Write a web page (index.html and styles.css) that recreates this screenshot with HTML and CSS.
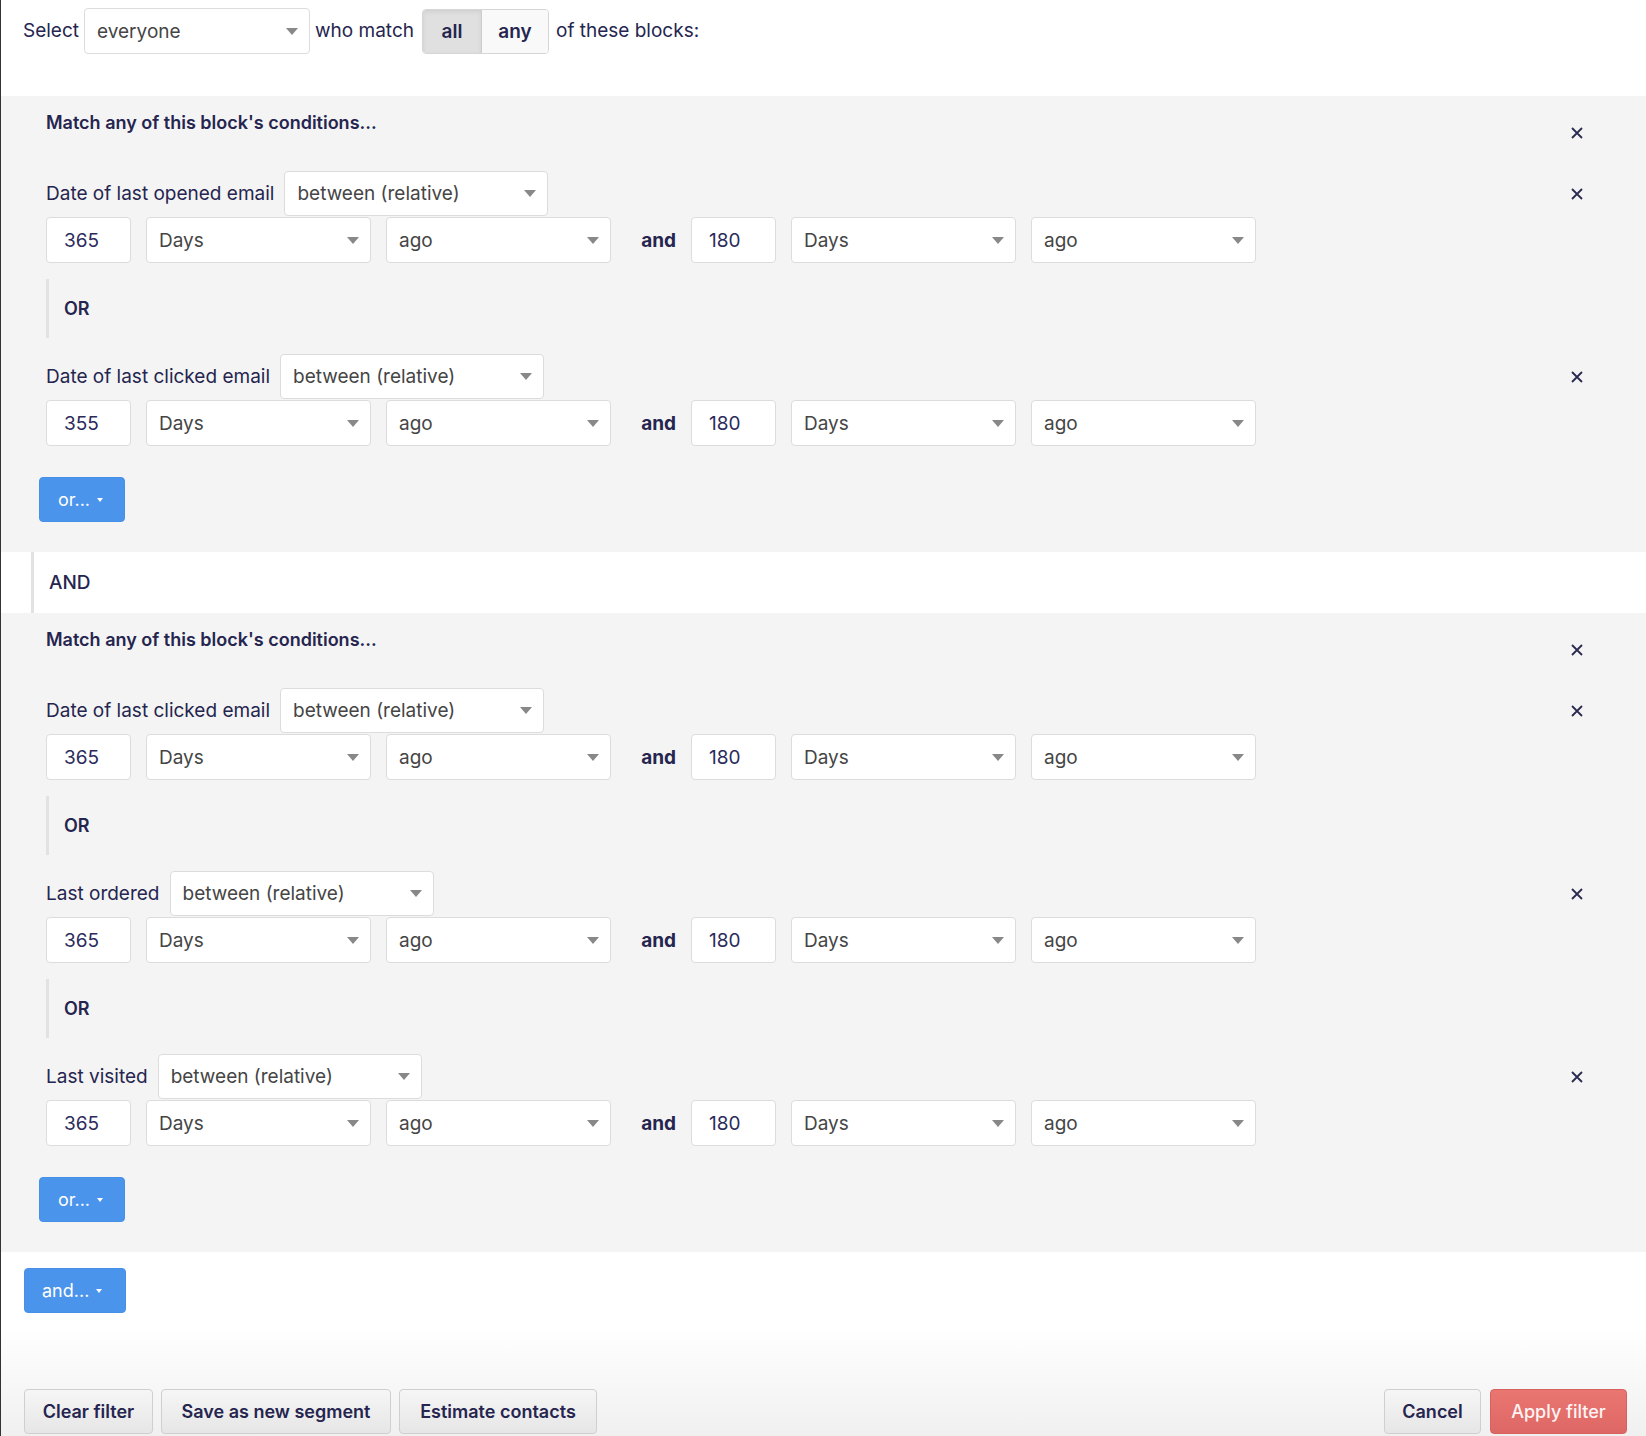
FILE: index.html
```html
<!DOCTYPE html>
<html lang="en">
<head>
<meta charset="utf-8">
<title>Filter</title>
<link rel="stylesheet" href="styles.css">
</head>
<body>
<div class="page">
  <div class="topbar">
    <span class="txt">Select</span>
    <div class="sel sel-top"><span>everyone</span><i class="caret"></i></div>
    <span class="txt">who match</span>
    <div class="seg"><span class="on">all</span><span class="off">any</span></div>
    <span class="txt">of these blocks:</span>
  </div>

  <div class="block">
    <div class="block-head">
      <div class="block-title">Match any of this block's conditions...</div>
      <svg class="close" viewBox="0 0 12 12"><path d="M1 1L11 11M11 1L1 11"/></svg>
    </div>
    <div class="cond">
      <div class="cond-head">
        <span class="label">Date of last opened email</span>
        <div class="sel sel-op"><span>between (relative)</span><i class="caret"></i></div>
        <svg class="close" viewBox="0 0 12 12"><path d="M1 1L11 11M11 1L1 11"/></svg>
      </div>
      <div class="inputs">
        <input class="num" value="365">
        <div class="sel sel-in"><span>Days</span><i class="caret"></i></div>
        <div class="sel sel-in"><span>ago</span><i class="caret"></i></div>
        <span class="and">and</span>
        <input class="num" value="180">
        <div class="sel sel-in"><span>Days</span><i class="caret"></i></div>
        <div class="sel sel-in"><span>ago</span><i class="caret"></i></div>
      </div>
    </div>
    <div class="or">OR</div>
    <div class="cond">
      <div class="cond-head">
        <span class="label">Date of last clicked email</span>
        <div class="sel sel-op"><span>between (relative)</span><i class="caret"></i></div>
        <svg class="close" viewBox="0 0 12 12"><path d="M1 1L11 11M11 1L1 11"/></svg>
      </div>
      <div class="inputs">
        <input class="num" value="355">
        <div class="sel sel-in"><span>Days</span><i class="caret"></i></div>
        <div class="sel sel-in"><span>ago</span><i class="caret"></i></div>
        <span class="and">and</span>
        <input class="num" value="180">
        <div class="sel sel-in"><span>Days</span><i class="caret"></i></div>
        <div class="sel sel-in"><span>ago</span><i class="caret"></i></div>
      </div>
    </div>
    <button class="btn-blue btn-or">or... <i class="caret-w"></i></button>
  </div>

  <div class="andband">AND</div>

  <div class="block">
    <div class="block-head">
      <div class="block-title">Match any of this block's conditions...</div>
      <svg class="close" viewBox="0 0 12 12"><path d="M1 1L11 11M11 1L1 11"/></svg>
    </div>
    <div class="cond">
      <div class="cond-head">
        <span class="label">Date of last clicked email</span>
        <div class="sel sel-op"><span>between (relative)</span><i class="caret"></i></div>
        <svg class="close" viewBox="0 0 12 12"><path d="M1 1L11 11M11 1L1 11"/></svg>
      </div>
      <div class="inputs">
        <input class="num" value="365">
        <div class="sel sel-in"><span>Days</span><i class="caret"></i></div>
        <div class="sel sel-in"><span>ago</span><i class="caret"></i></div>
        <span class="and">and</span>
        <input class="num" value="180">
        <div class="sel sel-in"><span>Days</span><i class="caret"></i></div>
        <div class="sel sel-in"><span>ago</span><i class="caret"></i></div>
      </div>
    </div>
    <div class="or">OR</div>
    <div class="cond">
      <div class="cond-head">
        <span class="label">Last ordered</span>
        <div class="sel sel-op"><span>between (relative)</span><i class="caret"></i></div>
        <svg class="close" viewBox="0 0 12 12"><path d="M1 1L11 11M11 1L1 11"/></svg>
      </div>
      <div class="inputs">
        <input class="num" value="365">
        <div class="sel sel-in"><span>Days</span><i class="caret"></i></div>
        <div class="sel sel-in"><span>ago</span><i class="caret"></i></div>
        <span class="and">and</span>
        <input class="num" value="180">
        <div class="sel sel-in"><span>Days</span><i class="caret"></i></div>
        <div class="sel sel-in"><span>ago</span><i class="caret"></i></div>
      </div>
    </div>
    <div class="or">OR</div>
    <div class="cond">
      <div class="cond-head">
        <span class="label">Last visited</span>
        <div class="sel sel-op"><span>between (relative)</span><i class="caret"></i></div>
        <svg class="close" viewBox="0 0 12 12"><path d="M1 1L11 11M11 1L1 11"/></svg>
      </div>
      <div class="inputs">
        <input class="num" value="365">
        <div class="sel sel-in"><span>Days</span><i class="caret"></i></div>
        <div class="sel sel-in"><span>ago</span><i class="caret"></i></div>
        <span class="and">and</span>
        <input class="num" value="180">
        <div class="sel sel-in"><span>Days</span><i class="caret"></i></div>
        <div class="sel sel-in"><span>ago</span><i class="caret"></i></div>
      </div>
    </div>
    <button class="btn-blue btn-or">or... <i class="caret-w"></i></button>
  </div>

  <button class="btn-blue btn-and">and... <i class="caret-w"></i></button>

  <div class="footer">
    <div class="fgroup">
      <button class="fbtn w-clear">Clear filter</button>
      <button class="fbtn w-save">Save as new segment</button>
      <button class="fbtn w-est">Estimate contacts</button>
    </div>
    <div class="fgroup fgroup-r">
      <button class="fbtn w-cancel">Cancel</button>
      <button class="fbtn apply">Apply filter</button>
    </div>
  </div>
</div>
</body>
</html>
```

FILE: styles.css
```css
html, body {
  margin: 0;
  padding: 0;
  background: #fff;
  overflow: hidden;
}
body {
  font-family: Inter, "Noto Sans", sans-serif;
  color: #25254f;
}
.page {
  border-left: 1px solid #333;
  height: 1436px;
  box-sizing: border-box;
  display: flex;
  flex-direction: column;
}

/* top bar */
.topbar {
  height: 96px;
  flex: none;
  box-sizing: border-box;
  padding: 8px 0 0 22px;
  display: flex;
  align-items: flex-start;
  gap: 5px;
  font-size: 19px;
}
.topbar .txt {
  height: 46px;
  line-height: 46px;
}
.topbar .seg {
  margin-left: 3px;
  margin-right: 2px;
}
.sel {
  display: flex;
  align-items: center;
  justify-content: space-between;
  box-sizing: border-box;
  background: #fff;
  border: 1px solid #dcdcdc;
  border-radius: 4px;
  height: 45px;
  padding: 0 11px 0 12px;
  color: #454545;
  font-size: 19px;
  flex: none;
}
.caret {
  width: 0;
  height: 0;
  border-left: 6px solid transparent;
  border-right: 6px solid transparent;
  border-top: 7px solid #888;
}
.sel-top {
  width: 226px;
  height: 46px;
}
.seg {
  display: flex;
  height: 45px;
  margin-top: 1px;
  border: 1px solid #d6d6d6;
  border-radius: 4px;
  overflow: hidden;
  box-sizing: border-box;
  font-weight: 600;
  font-size: 19px;
}
.seg span {
  display: flex;
  align-items: center;
  justify-content: center;
}
.seg .on {
  width: 58px;
  background: #e0e0e0;
  box-shadow: inset 0 2px 4px rgba(0, 0, 0, 0.08);
  border-right: 1px solid #cdcdcd;
}
.seg .off {
  width: 66px;
  background: #f9f9f9;
}

/* blocks */
.block {
  flex: none;
  background: #f4f4f4;
  padding: 14px 63px 30px 45px;
}
.block-head {
  display: flex;
  justify-content: space-between;
  height: 45px;
  margin-bottom: 16px;
}
.block-title {
  font-weight: 600;
  font-size: 18px;
  line-height: 26px;
}
.close {
  width: 12px;
  height: 12px;
  align-self: center;
  flex: none;
}
.close path {
  stroke: #2a2a50;
  stroke-width: 1.8;
  fill: none;
}
.cond-head {
  display: flex;
  align-items: center;
  height: 45px;
}
.label {
  font-size: 19px;
  margin-right: 10px;
}
.sel-op {
  width: 264px;
}
.cond-head .close {
  margin-left: auto;
}
.inputs {
  display: flex;
  align-items: center;
  gap: 15px;
  margin-top: 1px;
  height: 46px;
}
.num {
  width: 85px;
  height: 46px;
  box-sizing: border-box;
  border: 1px solid #dcdcdc;
  border-radius: 4px;
  padding: 0 0 0 17px;
  font-family: inherit;
  font-size: 19px;
  color: #2b2b5b;
  background: #fff;
  outline: none;
}
.sel-in {
  width: 225px;
  height: 46px;
}
.and {
  width: 50px;
  text-align: right;
  font-weight: 700;
  font-size: 19px;
}
.or {
  margin: 16px 0 16px;
  border-left: 3px solid #e2e2e2;
  height: 59px;
  display: flex;
  align-items: center;
  padding-left: 15px;
  font-weight: 600;
  font-size: 18px;
}
.btn-blue {
  display: flex;
  align-items: center;
  gap: 7px;
  height: 45px;
  box-sizing: border-box;
  border: 1px solid #4690e8;
  border-radius: 4px;
  background: #4a94ec;
  color: #fff;
  font-family: inherit;
  font-size: 18px;
  padding: 0 0 0 18px;
  cursor: pointer;
}
.caret-w {
  width: 0;
  height: 0;
  border-left: 3.5px solid transparent;
  border-right: 3.5px solid transparent;
  border-top: 4px solid #fff;
}
.btn-or {
  margin-top: 31px;
  margin-left: -7px;
  width: 86px;
}
.andband {
  flex: none;
  margin-left: 30px;
  border-left: 3px solid #e2e2e2;
  height: 61px;
  box-sizing: border-box;
  display: flex;
  align-items: center;
  padding-left: 15px;
  font-size: 19px;
  font-weight: 500;
}
.btn-and {
  flex: none;
  margin-top: 16px;
  margin-left: 23px;
  width: 102px;
  padding-left: 17px;
}

/* footer */
.footer {
  margin-top: auto;
  height: 108px;
  flex: none;
  box-sizing: border-box;
  background: linear-gradient(#ffffff, #f0f0f0);
  display: flex;
  align-items: flex-end;
  justify-content: space-between;
  padding: 0 19px 2px 23px;
}
.fgroup {
  display: flex;
  gap: 8px;
}
.fgroup-r {
  gap: 9px;
}
.fbtn {
  height: 45px;
  box-sizing: border-box;
  border: 1px solid #cfcfcf;
  border-radius: 4px;
  background: linear-gradient(#f6f6f6, #e6e6e6);
  font-family: inherit;
  font-weight: 600;
  font-size: 18px;
  color: #25254f;
  padding: 0;
  cursor: pointer;
}
.w-clear { width: 129px; }
.w-save { width: 230px; }
.w-est { width: 198px; }
.w-cancel { width: 97px; }
.apply {
  width: 137px;
  background: linear-gradient(#ea7672, #dd6764);
  border-color: #d9605d;
  color: #fff4f4;
  font-weight: 500;
}
```
